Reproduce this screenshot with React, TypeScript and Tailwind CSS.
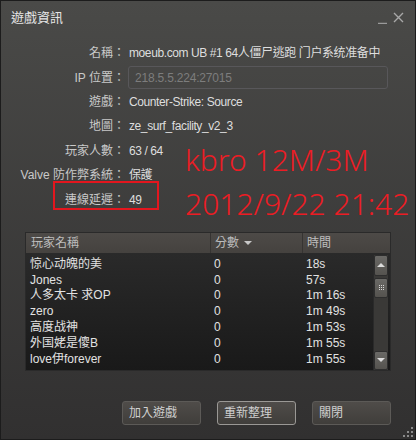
import React from "react";

const font = "font-['Liberation_Sans','Noto_Sans_CJK_TC',sans-serif]";

const info: { label: string; value: string }[] = [
  { label: "名稱：", value: "moeub.com UB #1 64人僵尸逃跑 门户系统准备中" },
  { label: "IP 位置：", value: "218.5.5.224:27015" },
  { label: "遊戲：", value: "Counter-Strike: Source" },
  { label: "地圖：", value: "ze_surf_facility_v2_3" },
  { label: "玩家人數：", value: "63 / 64" },
  { label: "Valve 防作弊系統：", value: "保護" },
  { label: "連線延遲：", value: "49" },
];

const players = [
  { name: "惊心动魄的美", score: "0", time: "18s" },
  { name: "Jones", score: "0", time: "57s" },
  { name: "人多太卡 求OP", score: "0", time: "1m 16s" },
  { name: "zero", score: "0", time: "1m 49s" },
  { name: "高度战神", score: "0", time: "1m 53s" },
  { name: "外国姥是傻B", score: "0", time: "1m 55s" },
  { name: "love伊forever", score: "0", time: "1m 55s" },
];

function Scrollbar() {
  return (
    <div className="flex w-[15px] flex-col bg-[#3a3937] border-l border-[#2a2a2a]">
      <div className="flex h-[21px] items-center justify-center rounded-[2px] bg-gradient-to-b from-[#6a6966] to-[#55534f] border border-[#2e2e2e]">
        <div className="h-0 w-0 border-x-[4px] border-b-[4px] border-x-transparent border-b-[#dcdcdc]" />
      </div>
      <div className="mt-[2px] grid h-[20px] place-items-center rounded-[2px] bg-gradient-to-b from-[#6a6966] to-[#55534f] border border-[#2e2e2e]">
        <div className="grid grid-cols-3 gap-[1px]">
          {Array.from({ length: 9 }).map((_, i) => (
            <div key={i} className="h-[1px] w-[1px] bg-[#d8d8d8]" />
          ))}
        </div>
      </div>
      <div className="flex-1" />
      <div className="flex h-[19px] items-center justify-center rounded-[2px] bg-gradient-to-b from-[#6a6966] to-[#55534f] border border-[#2e2e2e]">
        <div className="h-0 w-0 border-x-[4px] border-t-[4px] border-x-transparent border-t-[#dcdcdc]" />
      </div>
    </div>
  );
}

export default function App() {
  return (
    <div className={`${font} relative h-[440px] w-[416px] overflow-hidden border border-[#1c1c1c] bg-gradient-to-b from-[#4a4a48] to-[#313030]`}>
      {/* title bar */}
      <div className="flex h-[33px] items-center justify-between pl-[10px] pr-[11px]">
        <span className="text-[13px] text-[#e6e6e6]">遊戲資訊</span>
        <div className="flex items-center gap-[6px]">
          <svg width="9" height="12" viewBox="0 0 9 12">
            <line x1="0" y1="11.5" x2="9" y2="11.5" stroke="#9a9a9a" strokeWidth="1.5" />
          </svg>
          <svg width="11" height="11" viewBox="0 0 11 11">
            <path d="M1 1 L10 10 M10 1 L1 10" stroke="#a8a8a8" strokeWidth="1.4" />
          </svg>
        </div>
      </div>

      {/* info rows */}
      <div className="mt-[7px] flex flex-col">
        {info.map((row) => (
          <div key={row.label} className="flex h-[24.4px] items-center">
            <div className="w-[124px] text-right text-[12px] text-[#c9c9c9]">{row.label}</div>
            {row.label.startsWith("IP") ? (
              <div className="ml-[3px] flex h-[23px] w-[260px] items-center rounded-[3px] border border-[#58575a] px-[6px] text-[12px] tracking-[-0.2px] text-[#7d7d7d]">
                {row.value}
              </div>
            ) : (
              <div className="ml-[4px] text-[12px] tracking-[-0.4px] text-[#dedede]">{row.value}</div>
            )}
          </div>
        ))}
      </div>

      {/* annotation overlay */}
      <div className="absolute left-[52px] top-[180px] h-[29px] w-[106px] border-2 border-[#e3161e]" />
      <div className="absolute left-[184px] top-[140px] flex flex-col gap-[6px] font-['Noto_Sans',sans-serif] text-[30px] font-light leading-[38px] text-[#ec1c24]">
        <span>kbro 12M/3M</span>
        <span>2012/9/22 21:42</span>
      </div>

      {/* player table */}
      <div className="mx-[24px] mt-[20px] h-[139px] overflow-hidden border border-[#2a2a2a] bg-[#1e1e1e]">
        <div className="grid h-[20px] grid-cols-[184px_92px_1fr] bg-gradient-to-b from-[#4d4a47] to-[#45423f] text-[12px] text-[#bdbdbd]">
          <div className="flex items-center pl-[5px]">玩家名稱</div>
          <div className="flex items-center gap-[5px] border-l border-[#363432] pl-[4px]">
            分數
            <span className="h-0 w-0 border-x-[4px] border-t-[4px] border-x-transparent border-t-[#c8c8c8]" />
          </div>
          <div className="flex items-center border-l border-[#363432] pl-[4px]">時間</div>
        </div>
        <div className="flex h-[119px] bg-gradient-to-b from-[#2a2a2a] to-[#191919]">
          <div className="flex-1 pt-[2px]">
            {players.map((p) => (
              <div key={p.name} className="grid h-[15.8px] grid-cols-[184px_92px_1fr] items-center text-[12px] text-[#e2e2e2]">
                <div className="pl-[4px]">{p.name}</div>
                <div className="pl-[4px]">{p.score}</div>
                <div className="pl-[4px]">{p.time}</div>
              </div>
            ))}
          </div>
          <div className="flex pr-[2px] pt-[2px] pb-[2px]">
            <Scrollbar />
          </div>
        </div>
      </div>

      {/* buttons */}
      <div className="mt-[30px] flex justify-end gap-[16px] pr-[24px]">
        {["加入遊戲", "重新整理", "關閉"].map((b) => (
          <button
            key={b}
            className={`h-[24px] w-[79px] rounded-[3px] border bg-gradient-to-b from-[#4f4c49] to-[#403e3b] pl-[6px] text-left text-[12px] text-[#d0d0d0] ${
              b === "重新整理" ? "border-[#9a9895]" : "border-[#5c5a57]"
            }`}
          >
            {b}
          </button>
        ))}
      </div>

      {/* resize grip */}
      <div className="absolute bottom-[2px] right-[2px] grid grid-cols-3 gap-[2px]">
        {[0, 0, 1, 0, 1, 1, 1, 1, 1].map((v, i) => (
          <div key={i} className={`h-[2px] w-[2px] ${v ? "bg-[#8a8a8a]" : ""}`} />
        ))}
      </div>
    </div>
  );
}
